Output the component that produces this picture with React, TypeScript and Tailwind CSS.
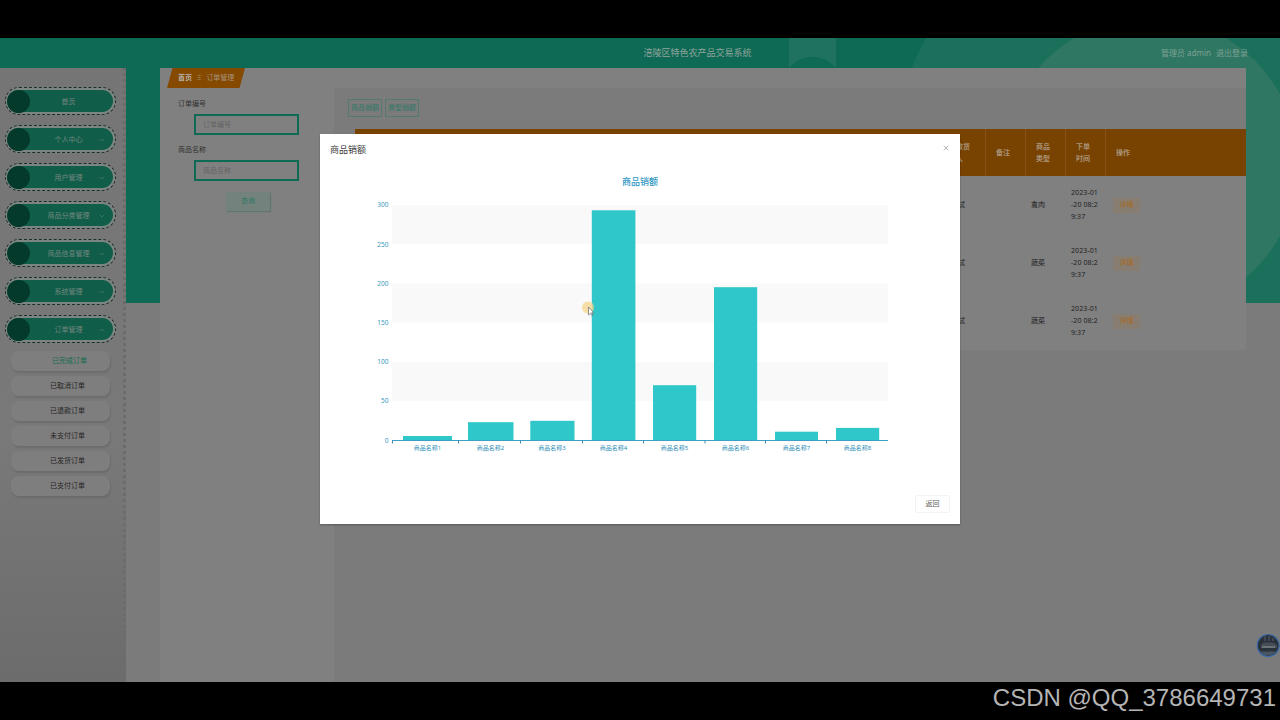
import { ChevronDown, ChevronUp, X } from 'lucide-react'

type Bar = {
  label: string
  x: number
  width: number
  top: number
  center: number
}

const MENU = [
  { label: '首页', arrow: 'none' },
  { label: '个人中心', arrow: 'down' },
  { label: '用户管理', arrow: 'down' },
  { label: '商品分类管理', arrow: 'down' },
  { label: '商品信息管理', arrow: 'down' },
  { label: '系统管理', arrow: 'down' },
  { label: '订单管理', arrow: 'up' },
]

const ORDER_MENU = ['已完成订单', '已取消订单', '已退款订单', '未支付订单', '已发货订单', '已支付订单']

const ROWS = ['禽肉', '蔬菜', '蔬菜']

const BARS: Bar[] = [
  { label: '商品名称1', x: 83, width: 49, top: 302.5, center: 107.5 },
  { label: '商品名称2', x: 148, width: 45.5, top: 288.7, center: 170.5 },
  { label: '商品名称3', x: 210.3, width: 44.2, top: 287.3, center: 232 },
  { label: '商品名称4', x: 271.8, width: 43.6, top: 76.8, center: 293.5 },
  { label: '商品名称5', x: 333, width: 43.2, top: 251.7, center: 354.5 },
  { label: '商品名称6', x: 394, width: 43.2, top: 153.7, center: 415.5 },
  { label: '商品名称7', x: 455, width: 43, top: 298.2, center: 476.5 },
  { label: '商品名称8', x: 516, width: 43.2, top: 294.4, center: 537.5 },
]

const Y_TICKS = [300, 250, 200, 150, 100, 50, 0]
const X_TICKS = [72.5, 138.5, 200.5, 262.5, 323.5, 385, 445.5, 506.5]

function Backdrop() {
  return (
    <svg className="absolute left-0 top-0" width="1280" height="265" viewBox="0 38 1280 265">
      <rect y="38" width="1280" height="265" fill="#0e6a54" />
      <circle cx="1150" cy="164" r="257" fill="#1a705b" />
      <circle cx="1150" cy="165" r="148" fill="#2f7763" />
      <path d="M789 38h47v30a30 30 0 0 0-47 0z" fill="#1f725d" />
    </svg>
  )
}

function Sidebar() {
  return (
    <aside className="w-[126px] shrink-0 border-r-[3px] border-dotted border-[#6c6c6c] bg-linear-to-b from-[#767575] from-0% via-[#7a7979] via-60% to-[#6c6c6c] to-100% pl-[5px] pt-[19px]">
      <nav className="flex flex-col gap-[10px]">
        {MENU.map((item) => (
          <div
            key={item.label}
            className="h-[28px] w-[111px] rounded-full border border-dashed border-[#1c2c28] bg-[#7c8581] p-[2px]"
          >
            <div className="flex h-full items-center rounded-full bg-[#105d49]">
              <div className="-ml-px h-[23px] w-[23px] shrink-0 rounded-full bg-[#043a2b]" />
              <span className="flex-1 pl-[9px] pt-[2px] text-center text-[7px] text-[#73877f]">{item.label}</span>
              <span className="w-[15px] shrink-0 pt-px">
                {item.arrow === 'down' && <ChevronDown className="h-[8px] w-[8px] text-[#44796b]" strokeWidth={2.5} />}
                {item.arrow === 'up' && <ChevronUp className="h-[8px] w-[8px] text-[#44796b]" strokeWidth={2.5} />}
              </span>
            </div>
          </div>
        ))}
      </nav>
      <div className="mt-[8px] flex flex-col gap-[5px] pl-[6px]">
        {ORDER_MENU.map((label, i) => (
          <div
            key={label}
            className={`flex h-[20px] w-[99px] items-center justify-center rounded-lg bg-[#7f7e7e] pt-px text-[7px] shadow-[1px_2px_2px_rgba(0,0,0,0.1)] ${
              i === 0 ? 'pl-[18px] text-[#116b53]' : 'pl-[14px] text-[#262626]'
            }`}
          >
            {label}
          </div>
        ))}
      </div>
    </aside>
  )
}

function SearchPanel() {
  return (
    <section className="w-[174px] shrink-0 bg-[#808080]">
      <div className="ml-[7px] flex h-[20px] w-[78px] items-center gap-[5px] bg-[#854900] pl-[11px] pt-px text-[7px] text-[#a5937c] [clip-path:polygon(7%_0,100%_0,93%_100%,0_100%)]">
        <b className="text-[#b5b0aa]">首页</b>
        <span>Ξ</span>
        <span>订单管理</span>
      </div>
      <div className="pl-[18px] text-[7px] leading-[10px] text-[#303030]">
        <p className="mt-[11px]">订单编号</p>
        <div className="ml-[16px] mt-[5px] flex h-[21px] w-[105px] items-center border-2 border-[#0e6a54] pl-[7px] text-[#646464]">
          订单编号
        </div>
        <p className="mt-[10px]">商品名称</p>
        <div className="ml-[16px] mt-[5px] flex h-[21px] w-[105px] items-center border-2 border-[#0e6a54] pl-[7px] text-[#646464]">
          商品名称
        </div>
        <div className="ml-[48px] mt-[11px] flex h-[19px] w-[44px] items-center justify-center bg-[#73827d] pb-[2px] text-[#2c7966] shadow-[1px_1px_1px_#60756e]">
          查询
        </div>
      </div>
    </section>
  )
}

function OrderTable() {
  return (
    <div className="ml-[21px] text-[7px]">
      <div className="grid h-[47px] grid-cols-[631px_40px_40px_40px_140px] bg-[#784200] font-bold leading-[12px] text-[#a8937a]">
        <div className="flex items-center justify-end border-r border-[#85531b] pr-[15px]">
          收货
          <br />人
        </div>
        <div className="flex items-center border-r border-[#85531b] pl-[10px]">备注</div>
        <div className="flex items-center border-r border-[#85531b] px-[10px]">商品类型</div>
        <div className="flex items-center border-r border-[#85531b] px-[10px]">下单时间</div>
        <div className="flex items-center pl-[10px]">操作</div>
      </div>
      {ROWS.map((type, i) => (
        <div
          key={i}
          className="grid h-[58px] grid-cols-[631px_40px_40px_40px_140px] items-center bg-[#808080] leading-[12px] text-[#222]"
        >
          <div className="pr-[21px] text-right">测试</div>
          <div />
          <div className="pl-[5px]">{type}</div>
          <div className="whitespace-nowrap pl-[5px] tracking-[0.1px]">
            2023-01
            <br />
            -20 08:2
            <br />
            9:37
          </div>
          <div className="pl-[7px]">
            <span className="flex h-[15px] w-[27px] items-center justify-center bg-[#877d70] text-[#a9691c]">详情</span>
          </div>
        </div>
      ))}
    </div>
  )
}

function SalesChart() {
  return (
    <svg className="block" width="640" height="330" viewBox="0 31.5 640 330">
      <text x="320" y="51.5" textAnchor="middle" fontSize="9" fill="#2f97c4" fontWeight="500">
        商品销额
      </text>
      {[71.5, 150, 228.5].map((y) => (
        <rect key={y} x="72" y={y} width="496" height="39" fill="#f9f9f9" />
      ))}
      {Y_TICKS.map((v, i) => (
        <text key={v} x="68.5" y={73.8 + i * 39.2} textAnchor="end" fontSize="6.5" fill="#3a98bd">
          {v}
        </text>
      ))}
      {BARS.map((bar) => (
        <g key={bar.label}>
          <rect x={bar.x} y={bar.top} width={bar.width} height={307 - bar.top} fill="#2fc7c9" />
          <text x={bar.center} y="316" textAnchor="middle" fontSize="6" fill="#2f8fb8">
            {bar.label}
          </text>
        </g>
      ))}
      <path d="M72 307h496" stroke="#3c9fc4" strokeWidth="1" />
      {X_TICKS.map((x) => (
        <path key={x} d={`M${x} 307v3`} stroke="#3c8fb4" strokeWidth="1" />
      ))}
    </svg>
  )
}

function SalesModal() {
  return (
    <div className="absolute left-[320px] top-[95.5px] flex h-[390px] w-[640px] flex-col bg-white shadow-[0_1px_2px_rgba(0,0,0,0.3)]">
      <div className="flex h-[31px] shrink-0 items-center justify-between pl-[10px] pr-[10px]">
        <h2 className="pt-px text-[9px] text-[#3a3a3a]">商品销额</h2>
        <X className="mb-[3px] h-[8px] w-[8px] text-[#8f8f8f]" strokeWidth={2} />
      </div>
      <SalesChart />
      <div className="flex justify-end pr-[10px]">
        <button className="h-[18px] w-[35px] rounded-[2px] border border-[#f3f3f3] pt-[2px] text-[7px] text-[#606060]">
          返回
        </button>
      </div>
    </div>
  )
}

export default function App() {
  return (
    <div className="flex h-[720px] w-[1280px] flex-col overflow-hidden bg-black pt-[38px] font-['Noto_Sans','Noto_Sans_CJK_SC',sans-serif]">
      <div className="relative h-[644px] shrink-0 overflow-hidden bg-[#7b7b7b]">
        <Backdrop />
        <div className="relative flex h-full flex-col">
          <header className="flex h-[30px] shrink-0 items-center text-[#90a39d]">
            <h1 className="w-[788px] pl-[643.5px] text-[9px] whitespace-nowrap">涪陵区特色农产品交易系统</h1>
            <div className="flex flex-1 justify-end gap-[5px] pr-[32px] text-[8px] text-[#7da094]">
              <span>管理员 admin</span>
              <span>退出登录</span>
            </div>
          </header>
          <div className="flex flex-1">
            <Sidebar />
            <main className="ml-[34px] flex w-[1086px] bg-[#7b7b7b]">
              <SearchPanel />
              <section className="flex-1">
                <div className="h-[20px] bg-[#808080]" />
                <div className="flex h-[41px] gap-[3px] pl-[14px] pt-[11px] text-[7px] text-[#2f7866]">
                  <span className="flex h-[18px] w-[34px] items-center justify-center border border-[#55786f]">
                    商品销额
                  </span>
                  <span className="flex h-[18px] w-[34px] items-center justify-center border border-[#55786f]">
                    类型销额
                  </span>
                </div>
                <OrderTable />
              </section>
            </main>
          </div>
        </div>

        <SalesModal />

        {/* Pointer with click highlight */}
        <svg className="absolute left-[580px] top-[260px]" width="18" height="20" viewBox="0 0 18 20">
          <circle cx="8" cy="9.5" r="6" fill="#f3d58b" opacity="0.75" />
          <path d="M8.5 9v8l2-1.8 1.2 2.4 1-.5-1.1-2.3h2.2z" fill="#fff" stroke="#666" strokeWidth="0.7" />
        </svg>

        {/* Floating avatar */}
        <svg className="absolute left-[1256px] top-[595px]" width="24" height="25" viewBox="0 0 24 25">
          <circle cx="12.2" cy="12.5" r="11" fill="#29313a" stroke="#3d6ba8" strokeWidth="1.2" />
          <path d="M4 18.5a10 10 0 0 0 16 0z" fill="#485663" />
          <path d="M5 11.5l3-2h9l4 2.5v3H5z" fill="#454e56" />
          <path d="M6 14h13" stroke="#929898" strokeWidth="1" />
          <path d="M9 3v5M13 3v5M17 5v3" stroke="#56616b" strokeWidth="1" />
        </svg>
      </div>
      <div className="flex h-[38px] shrink-0 items-center justify-end pr-[4px] font-['Liberation_Sans',sans-serif] text-[24px] leading-none text-[#b5b5b5]">
        <span className="-mt-[6px]">CSDN @QQ_3786649731</span>
      </div>
    </div>
  )
}
